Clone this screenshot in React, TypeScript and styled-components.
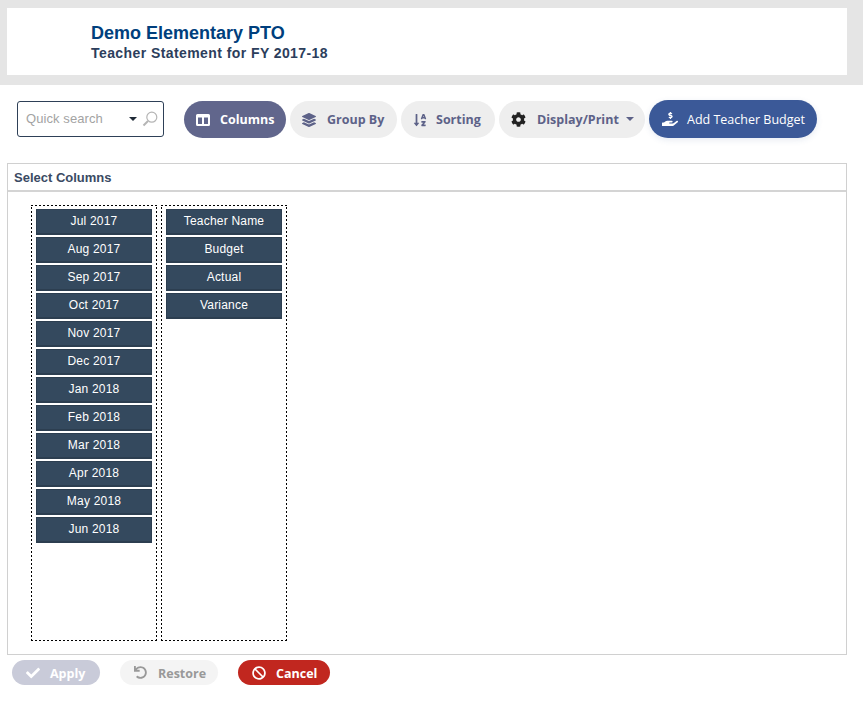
import React from "react";
import styled, { createGlobalStyle } from "styled-components";
import { FaLayerGroup, FaSortAlphaDown, FaCog, FaHandHoldingUsd, FaCheck, FaBan, FaUndo } from "react-icons/fa";

const Global = createGlobalStyle`
  html, body { margin: 0; padding: 0; background: #fff; }
  body { font-family: "Liberation Sans", Arial, sans-serif; }
  * { box-sizing: border-box; }
`;
const Page = styled.div`width: 863px; height: 706px; overflow: hidden; background: #fff;`;
const HeaderBand = styled.header`background: #e5e5e5; padding: 8px 16px 10px 7px; height: 85px;`;
const HeaderCard = styled.div`background: #fff; height: 67px; padding: 15px 0 0 84px;`;
const Title = styled.h1`margin: 0; font-size: 18px; line-height: 20px; font-weight: 700; color: #003f7d;`;
const Subtitle = styled.h2`margin: 1px 0 0; font-size: 14px; line-height: 19px; font-weight: 700; color: #2c3e5c; letter-spacing: 0.42px;`;
const Toolbar = styled.div`display: flex; align-items: flex-start; padding: 15px 0 0 17px; height: 78px;`;
const Search = styled.div`
  width: 147px; height: 36px; margin-top: 1px; margin-right: 20px; border: 1px solid #2e4057; border-radius: 3px;
  display: flex; align-items: center; padding: 0 5px 0 8px; color: #a3a3a3; font-size: 13px; letter-spacing: .08px;
  span { flex: 1; margin-top: -2px; }
`;
const Caret = styled.i`width: 0; height: 0; border-left: 4px solid transparent; border-right: 4px solid transparent; border-top: 4px solid #1f2a36; margin-right: 5px;`;
const PillCaret = styled.i`width: 0; height: 0; border-left: 4px solid transparent; border-right: 4px solid transparent; border-top: 4px solid #5d6288; margin-left: -4px; margin-top: -1px;`;
const Pills = styled.div`display: flex; gap: 4px;`;
const Pill = styled.button<{ $active?: boolean; $w: number; $gap: number }>`
  width: ${p => p.$w}px; height: 37px; margin-top: 1px; border: 0; border-radius: 19px; padding: 0 0 0 12px;
  display: flex; align-items: center; gap: ${p => p.$gap}px;
  background: ${p => (p.$active ? "#61668c" : "#eeeeee")};
  color: ${p => (p.$active ? "#fff" : "#5d6288")};
  font: 700 12.5px "Open Sans", "Noto Sans", sans-serif;
  svg { flex: none; }
`;
const AddButton = styled.button`
  width: 168px; height: 38px; border: 0; border-radius: 19px; padding: 0 0 0 13px;
  display: flex; align-items: center; gap: 9px; background: #3b5998; color: #fff;
  font: 400 12.5px "Open Sans", "Noto Sans", sans-serif;
  box-shadow: 0 2px 6px rgba(59, 89, 152, .12);
`;
const Panel = styled.section`margin: 0 16px 0 7px; height: 492px; border: 1px solid #d0d0d0;`;
const PanelHeader = styled.div`
  height: 28px; border-bottom: 2px solid #d4d4d4; padding: 6px 0 0 6px;
  font-size: 13px; line-height: 16px; font-weight: 700; color: #3a4a63;
`;
const Lists = styled.div`display: flex; gap: 4px; padding: 13px 0 0 23px;`;
const DropList = styled.div`
  width: 126px; height: 436px; padding: 4px 5px 0; display: flex; flex-direction: column; gap: 2px;
  background:
    repeating-linear-gradient(90deg, #000 0 2px, transparent 2px 4px) left top / 100% 1px no-repeat,
    repeating-linear-gradient(90deg, #000 0 2px, transparent 2px 4px) left bottom / 100% 1px no-repeat,
    repeating-linear-gradient(0deg, #000 0 2px, transparent 2px 4px) left top / 1px 100% no-repeat,
    repeating-linear-gradient(0deg, #000 0 2px, transparent 2px 4px) right top / 1px 100% no-repeat;
`;
const Item = styled.div`
  height: 26px; background: #34495e; border: 1px solid #2c3e50; border-bottom-width: 2px; color: #fff;
  text-align: center; font-size: 12px; line-height: 22px; letter-spacing: .2px;
`;
const Footer = styled.div`display: flex; gap: 20px; padding: 5px 0 0 12px;`;
const Action = styled.button<{ $kind: "apply" | "restore" | "cancel"; $w: number; $gap: number }>`
  width: ${p => p.$w}px; height: 25px; border: 0; border-radius: 13px; padding: 1px 0 0 14px;
  display: flex; align-items: center; gap: ${p => p.$gap}px;
  font: 700 12.5px "Open Sans", "Noto Sans", sans-serif;
  background: ${p => ({ apply: "#c9cbd9", restore: "#f4f4f4", cancel: "#c1271f" }[p.$kind])};
  color: ${p => (p.$kind === "restore" ? "#999" : "#fff")};
  svg { flex: none; margin-top: -1px; }
`;

const ColumnsIcon = () => (
  <svg width="14" height="12" viewBox="0 0 14 12"><path fill="#fff" fillRule="evenodd" d="M1.5 0h11A1.5 1.5 0 0 1 14 1.500v9a1.500 1.500 0 0 1-1.500 1.500h-11A1.500 1.500 0 0 1 0 10.500v-9A1.500 1.500 0 0 1 1.500 0zM2 3.500V10h4V3.500zm6 0V10h4V3.500z"/></svg>
);
const SearchIcon = () => (
  <svg width="16" height="16" viewBox="0 0 16 16" fill="none" stroke="#b5b5b5"><circle cx="9.800" cy="6.200" r="5" strokeWidth="1.200"/><path d="M6 10l-4.500 4.500" strokeWidth="2"/></svg>
);

const months = ["Jul 2017","Aug 2017","Sep 2017","Oct 2017","Nov 2017","Dec 2017","Jan 2018","Feb 2018","Mar 2018","Apr 2018","May 2018","Jun 2018"];
const fields = ["Teacher Name","Budget","Actual","Variance"];

export default function App() {
  return (
    <Page>
      <Global />
      <HeaderBand>
        <HeaderCard>
          <Title>Demo Elementary PTO</Title>
          <Subtitle>Teacher Statement for FY 2017-18</Subtitle>
        </HeaderCard>
      </HeaderBand>
      <Toolbar>
        <Search><span>Quick search</span><Caret /><SearchIcon /></Search>
        <Pills>
          <Pill $active $w={102} $gap={10}><ColumnsIcon />Columns</Pill>
          <Pill $w={107} $gap={11}><FaLayerGroup size={14} />Group By</Pill>
          <Pill $w={94} $gap={9}><FaSortAlphaDown size={14} />Sorting</Pill>
          <Pill $w={146} $gap={11}><FaCog size={15} color="#222" />Display/Print<PillCaret /></Pill>
          <AddButton><FaHandHoldingUsd size={16} />Add Teacher Budget</AddButton>
        </Pills>
      </Toolbar>
      <Panel>
        <PanelHeader>Select Columns</PanelHeader>
        <Lists>
          <DropList>{months.map(m => <Item key={m}>{m}</Item>)}</DropList>
          <DropList>{fields.map(f => <Item key={f}>{f}</Item>)}</DropList>
        </Lists>
      </Panel>
      <Footer>
        <Action $kind="apply" $w={88} $gap={10}><FaCheck size={14} />Apply</Action>
        <Action $kind="restore" $w={98} $gap={11}><FaUndo size={13} />Restore</Action>
        <Action $kind="cancel" $w={92} $gap={10}><FaBan size={14} />Cancel</Action>
      </Footer>
    </Page>
  );
}
